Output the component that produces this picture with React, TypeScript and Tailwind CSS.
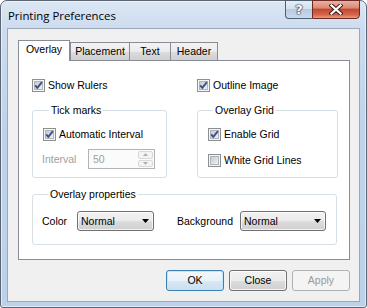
import React from "react";

const body = "font-['Liberation_Sans',Arial,sans-serif] text-[10.5px] leading-[13px] text-black";

function Check({ checked }: { checked: boolean }) {
  return (
    <svg width="13" height="13" viewBox="0 0 13 13" className="shrink-0 block">
      <defs>
        <linearGradient id="cbg" x1="0" y1="0" x2="1" y2="1">
          <stop offset="0" stopColor="#c3c8cf" />
          <stop offset="1" stopColor="#f3f3f3" />
        </linearGradient>
      </defs>
      <rect x="0.5" y="0.5" width="12" height="12" fill="#f5f5f5" stroke="#8e8f8f" />
      <rect x="2.5" y="2.5" width="8" height="8" fill="url(#cbg)" stroke="#b0b5bb" />
      {checked && (
        <path d="M3.2 6.3 L5.3 8.9 L9.9 3.1" fill="none" stroke="#3d5289" strokeWidth="1.9" strokeLinejoin="round" />
      )}
    </svg>
  );
}

function CheckRow({ checked, label }: { checked: boolean; label: string }) {
  return (
    <div className="flex items-center h-[13px] gap-[3px]">
      <Check checked={checked} />
      <span className="whitespace-nowrap">{label}</span>
    </div>
  );
}

function Combo({ w }: { w: string }) {
  return (
    <div
      className={`${w} h-[20px] rounded-[3px] border border-[#707070] flex items-center justify-between pl-[3px] pr-[4px] bg-[linear-gradient(180deg,#f2f2f2_0%,#ebebeb_50%,#dddddd_51%,#cfcfcf_100%)] shadow-[inset_0_0_0_1px_rgba(255,255,255,0.7)]`}
    >
      <span>Normal</span>
      <svg width="7" height="4" viewBox="0 0 7 4" className="block">
        <path d="M0 0 H7 L3.5 4 Z" fill="#000" />
      </svg>
    </div>
  );
}

function Btn({ label, kind }: { label: string; kind: "default" | "normal" | "disabled" }) {
  const cls =
    kind === "default"
      ? "border-[#3c7fb1] bg-[linear-gradient(180deg,#f3f8fc_0%,#e9f2f9_50%,#d8e8f5_51%,#cbdff0_100%)] shadow-[inset_0_0_0_1px_#bfe8fb] text-black"
      : kind === "normal"
      ? "border-[#707070] bg-[linear-gradient(180deg,#f2f2f2_0%,#ebebeb_50%,#dddddd_51%,#cfcfcf_100%)] shadow-[inset_0_0_0_1px_rgba(255,255,255,0.75)] text-black"
      : "border-[#adb2b5] bg-[#f4f4f4] text-[#9a9a9a]";
  return (
    <div className={`w-[58px] h-[21px] rounded-[3px] border flex items-center justify-center ${cls}`}>{label}</div>
  );
}

export default function App() {
  return (
    <div className="w-[367px] h-[308px] overflow-hidden">
      <div
        className={`w-[367px] h-[308px] flex flex-col border border-[#5b6573] rounded-t-[7px] rounded-b-[3px] bg-[linear-gradient(180deg,#dce7f4_0px,#cddcef_27px,#bfd4eb_120px,#bcd2ea_100%)] shadow-[inset_0_0_0_1px_rgba(255,255,255,0.55)] ${body}`}
      >
        {/* title bar */}
        <div className="h-[27px] flex items-start pl-[7px] pr-[6px] shrink-0">
          <span className="self-center mt-[1px] font-['Open_Sans',sans-serif] text-[11.4px] leading-[15px] text-black whitespace-nowrap">
            Printing Preferences
          </span>
          <div className="ml-auto flex -mt-px">
            <div className="w-[27px] h-[19px] rounded-bl-[4px] border border-[#4f5f72] border-r-0 bg-[linear-gradient(180deg,#e6eef7_0%,#d3e0ee_45%,#b9cbe0_50%,#c9d9ec_100%)] flex items-center justify-center">
              <span className="font-['DejaVu_Sans',sans-serif] font-bold text-[13px] leading-[13px] text-white [text-shadow:0_0_1px_#222,0_0_1px_#222,0_0_2px_#333]">
                ?
              </span>
            </div>
            <div className="w-[48px] h-[19px] rounded-br-[4px] border border-[#6b2a22] bg-[linear-gradient(180deg,#eab1a3_0%,#d98a77_40%,#c5472f_50%,#d3654c_80%,#e89a7f_100%)] flex items-center justify-center">
              <svg width="14" height="11" viewBox="0 0 14 11" className="block">
                <path d="M2.5 1.5 L11.5 9.5 M11.5 1.5 L2.5 9.5" stroke="#3a1510" strokeWidth="4.2" strokeLinecap="square" />
                <path d="M2.5 1.5 L11.5 9.5 M11.5 1.5 L2.5 9.5" stroke="#ffffff" strokeWidth="2.3" strokeLinecap="square" />
              </svg>
            </div>
          </div>
        </div>

        {/* client area */}
        <div className="mx-[6px] h-[274px] shrink-0 border border-[#9aa8b8] bg-[#f0f0f0] pt-[11px] pl-[10px] pr-[9px] flex flex-col">
          {/* tabs */}
          <div className="h-[20px] flex items-end shrink-0">
            <div className="relative z-10 w-[52px] h-[21px] -mb-px border border-b-0 border-[#898c95] bg-white flex justify-center pt-[2px]">
              Overlay
            </div>
            <div className="w-[60px] h-[18px] border border-b-0 border-[#898c95] bg-[linear-gradient(180deg,#f3f3f3_0%,#ebebeb_50%,#dddddd_51%,#cfcfcf_100%)] flex justify-center pt-[2px]">
              Placement
            </div>
            <div className="-ml-px w-[42px] h-[18px] border border-b-0 border-[#898c95] bg-[linear-gradient(180deg,#f3f3f3_0%,#ebebeb_50%,#dddddd_51%,#cfcfcf_100%)] flex justify-center pt-[2px]">
              Text
            </div>
            <div className="-ml-px w-[48px] h-[18px] border border-b-0 border-[#898c95] bg-[linear-gradient(180deg,#f3f3f3_0%,#ebebeb_50%,#dddddd_51%,#cfcfcf_100%)] flex justify-center pt-[2px]">
              Header
            </div>
          </div>

          {/* panel */}
          <div className="w-[332px] h-[200px] shrink-0 border border-[#898c95] bg-white pt-[18px] pl-[13px] pr-[11px] flex flex-col">
            <div className="grid grid-cols-[135px_141px] gap-x-[30px]">
              <CheckRow checked label="Show Rulers" />
              <CheckRow checked label="Outline Image" />

              <fieldset className="mt-[12px] border border-[#d5dfe5] rounded-[3px] pl-[10px] pr-[10px] pt-[11px] pb-[8px]">
                <legend className="ml-[6px] px-[2px] leading-[13px]">Tick marks</legend>
                <CheckRow checked label="Automatic Interval" />
                <div className="mt-[8px] flex items-center">
                  <span className="-ml-px w-[46px] text-[#a0a0a0]">Interval</span>
                  <div className="w-[67px] h-[20px] border border-[#afb4b8] bg-[#fbfbfb] flex items-stretch p-px">
                    <span className="flex-1 pl-[3px] self-center text-[#a0a0a0]">50</span>
                    <div className="w-[15px] flex flex-col gap-px">
                      <div className="flex-1 border border-[#d9d9d9] rounded-[2px] bg-[#f4f4f4] flex items-center justify-center">
                        <svg width="5" height="3" viewBox="0 0 5 3" className="block">
                          <path d="M0 3 H5 L2.5 0 Z" fill="#b0b0b0" />
                        </svg>
                      </div>
                      <div className="flex-1 border border-[#d9d9d9] rounded-[2px] bg-[#f4f4f4] flex items-center justify-center">
                        <svg width="5" height="3" viewBox="0 0 5 3" className="block">
                          <path d="M0 0 H5 L2.5 3 Z" fill="#b0b0b0" />
                        </svg>
                      </div>
                    </div>
                  </div>
                </div>
              </fieldset>

              <fieldset className="mt-[12px] border border-[#d5dfe5] rounded-[3px] pl-[10px] pr-[10px] pt-[11px] pb-[8px] flex flex-col gap-[13px]">
                <legend className="ml-[5px] px-[2px] leading-[13px]">Overlay Grid</legend>
                <CheckRow checked label="Enable Grid" />
                <CheckRow checked={false} label="White Grid Lines" />
              </fieldset>

              <fieldset className="col-span-2 mt-[10px] mr-[1px] border border-[#d5dfe5] rounded-[3px] pl-[9px] pt-[10px] pb-[13px]">
                <legend className="ml-[6px] px-[2px] leading-[13px]">Overlay properties</legend>
                <div className="flex items-center">
                  <span className="w-[35px]">Color</span>
                  <Combo w="w-[77px]" />
                  <span className="ml-[23px] w-[63px]">Background</span>
                  <Combo w="w-[86px]" />
                </div>
              </fieldset>
            </div>
          </div>

          {/* buttons */}
          <div className="w-[332px] mt-[10px] flex justify-end gap-[5px]">
            <Btn label="OK" kind="default" />
            <Btn label="Close" kind="normal" />
            <Btn label="Apply" kind="disabled" />
          </div>
        </div>
      </div>
    </div>
  );
}
